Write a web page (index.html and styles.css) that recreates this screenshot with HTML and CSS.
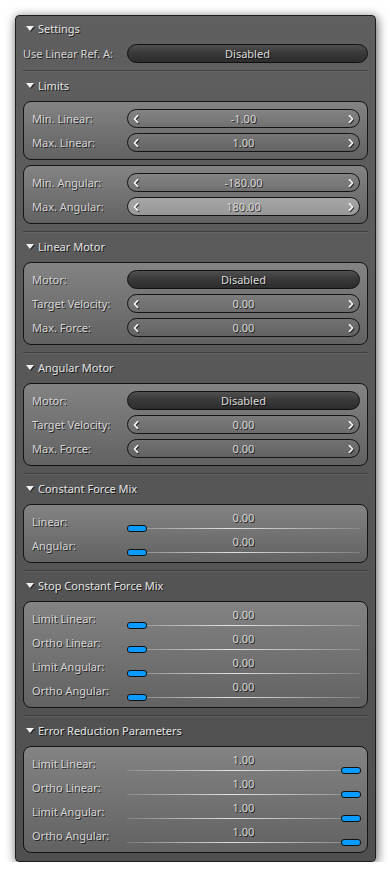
FILE: index.html
```html
<!DOCTYPE html>
<html>
<head>
<meta charset="utf-8">
<link rel="stylesheet" href="styles.css">
</head>
<body>
<div class="panel">
  <div class="hdr first"><span class="tri"></span>Settings</div>
  <div class="row"><span class="lbl">Use Linear Ref. A:</span><div class="btn wide">Disabled</div></div>
  <div class="sep"></div>

  <div class="hdr"><span class="tri"></span>Limits</div>
  <div class="group">
    <div class="row"><span class="lbl">Min. Linear:</span><div class="spin"><svg class="arr" viewBox="0 0 6 8" width="6" height="8"><path d="M4.6 0.6 L1.4 4 L4.6 7.4"/></svg><span class="sv">-1.00</span><svg class="arr" viewBox="0 0 6 8" width="6" height="8"><path d="M1.4 0.6 L4.6 4 L1.4 7.4"/></svg></div></div>
    <div class="row"><span class="lbl">Max. Linear:</span><div class="spin"><svg class="arr" viewBox="0 0 6 8" width="6" height="8"><path d="M4.6 0.6 L1.4 4 L4.6 7.4"/></svg><span class="sv">1.00</span><svg class="arr" viewBox="0 0 6 8" width="6" height="8"><path d="M1.4 0.6 L4.6 4 L1.4 7.4"/></svg></div></div>
  </div>
  <div class="group g2">
    <div class="row"><span class="lbl">Min. Angular:</span><div class="spin"><svg class="arr" viewBox="0 0 6 8" width="6" height="8"><path d="M4.6 0.6 L1.4 4 L4.6 7.4"/></svg><span class="sv">-180.00</span><svg class="arr" viewBox="0 0 6 8" width="6" height="8"><path d="M1.4 0.6 L4.6 4 L1.4 7.4"/></svg></div></div>
    <div class="row"><span class="lbl">Max. Angular:</span><div class="spin hover"><svg class="arr" viewBox="0 0 6 8" width="6" height="8"><path d="M4.6 0.6 L1.4 4 L4.6 7.4"/></svg><span class="sv">180.00</span><svg class="arr" viewBox="0 0 6 8" width="6" height="8"><path d="M1.4 0.6 L4.6 4 L1.4 7.4"/></svg></div></div>
  </div>
  <div class="sep"></div>

  <div class="hdr"><span class="tri"></span>Linear Motor</div>
  <div class="group">
    <div class="row"><span class="lbl">Motor:</span><div class="btn">Disabled</div></div>
    <div class="row"><span class="lbl">Target Velocity:</span><div class="spin"><svg class="arr" viewBox="0 0 6 8" width="6" height="8"><path d="M4.6 0.6 L1.4 4 L4.6 7.4"/></svg><span class="sv">0.00</span><svg class="arr" viewBox="0 0 6 8" width="6" height="8"><path d="M1.4 0.6 L4.6 4 L1.4 7.4"/></svg></div></div>
    <div class="row"><span class="lbl">Max. Force:</span><div class="spin"><svg class="arr" viewBox="0 0 6 8" width="6" height="8"><path d="M4.6 0.6 L1.4 4 L4.6 7.4"/></svg><span class="sv">0.00</span><svg class="arr" viewBox="0 0 6 8" width="6" height="8"><path d="M1.4 0.6 L4.6 4 L1.4 7.4"/></svg></div></div>
  </div>
  <div class="sep"></div>

  <div class="hdr"><span class="tri"></span>Angular Motor</div>
  <div class="group">
    <div class="row"><span class="lbl">Motor:</span><div class="btn">Disabled</div></div>
    <div class="row"><span class="lbl">Target Velocity:</span><div class="spin"><svg class="arr" viewBox="0 0 6 8" width="6" height="8"><path d="M4.6 0.6 L1.4 4 L4.6 7.4"/></svg><span class="sv">0.00</span><svg class="arr" viewBox="0 0 6 8" width="6" height="8"><path d="M1.4 0.6 L4.6 4 L1.4 7.4"/></svg></div></div>
    <div class="row"><span class="lbl">Max. Force:</span><div class="spin"><svg class="arr" viewBox="0 0 6 8" width="6" height="8"><path d="M4.6 0.6 L1.4 4 L4.6 7.4"/></svg><span class="sv">0.00</span><svg class="arr" viewBox="0 0 6 8" width="6" height="8"><path d="M1.4 0.6 L4.6 4 L1.4 7.4"/></svg></div></div>
  </div>
  <div class="sep"></div>

  <div class="hdr"><span class="tri"></span>Constant Force Mix</div>
  <div class="group">
    <div class="row"><span class="lbl">Linear:</span><div class="slider"><div class="val">0.00</div><div class="track"></div><span class="knob min"></span></div></div>
    <div class="row"><span class="lbl">Angular:</span><div class="slider"><div class="val">0.00</div><div class="track"></div><span class="knob min"></span></div></div>
  </div>
  <div class="sep"></div>

  <div class="hdr"><span class="tri"></span>Stop Constant Force Mix</div>
  <div class="group">
    <div class="row"><span class="lbl">Limit Linear:</span><div class="slider"><div class="val">0.00</div><div class="track"></div><span class="knob min"></span></div></div>
    <div class="row"><span class="lbl">Ortho Linear:</span><div class="slider"><div class="val">0.00</div><div class="track"></div><span class="knob min"></span></div></div>
    <div class="row"><span class="lbl">Limit Angular:</span><div class="slider"><div class="val">0.00</div><div class="track"></div><span class="knob min"></span></div></div>
    <div class="row"><span class="lbl">Ortho Angular:</span><div class="slider"><div class="val">0.00</div><div class="track"></div><span class="knob min"></span></div></div>
  </div>
  <div class="sep"></div>

  <div class="hdr"><span class="tri"></span>Error Reduction Parameters</div>
  <div class="group">
    <div class="row"><span class="lbl">Limit Linear:</span><div class="slider"><div class="val">1.00</div><div class="track"></div><span class="knob max"></span></div></div>
    <div class="row"><span class="lbl">Ortho Linear:</span><div class="slider"><div class="val">1.00</div><div class="track"></div><span class="knob max"></span></div></div>
    <div class="row"><span class="lbl">Limit Angular:</span><div class="slider"><div class="val">1.00</div><div class="track"></div><span class="knob max"></span></div></div>
    <div class="row"><span class="lbl">Ortho Angular:</span><div class="slider"><div class="val">1.00</div><div class="track"></div><span class="knob max"></span></div></div>
  </div>
</div>
</body>
</html>
```

FILE: styles.css
```css
html, body {
  margin: 0;
  padding: 0;
  background: #ffffff;
}
body {
  font-family: "Noto Sans", "DejaVu Sans", sans-serif;
  font-size: 11px;
  color: #d4d4d4;
}
.panel {
  box-sizing: border-box;
  margin: 15px 0 0 15px;
  width: 361px;
  height: 847px;
  padding: 0 7px 8px 7px;
  border: 1px solid #1c1c1c;
  border-radius: 4px;
  background: linear-gradient(#5f5f5f, #4f4f4f);
  box-shadow: 1px 2px 11px rgba(0, 0, 0, 0.65);
  display: flex;
  flex-direction: column;
}
.hdr {
  box-sizing: border-box;
  height: 30px;
  padding-bottom: 2px;
  display: flex;
  align-items: center;
  color: #e4e4e4;
  text-shadow: 1px 1px 0 rgba(0, 0, 0, 0.75);
  white-space: nowrap;
}
.hdr.first {
  height: 26px;
  margin-bottom: 2px;
}
.tri {
  width: 0;
  height: 0;
  margin: 1px 4px 0 3px;
  border-left: 4px solid transparent;
  border-right: 4px solid transparent;
  border-top: 5px solid #f4f4f4;
  filter: drop-shadow(1px 1px 0 rgba(0, 0, 0, 0.6));
}
.sep {
  height: 1px;
  margin-top: 7px;
  background: #3f3f3f;
  box-shadow: 0 1px 0 rgba(255, 255, 255, 0.06);
}
.group {
  border: 1px solid #141414;
  border-radius: 8px;
  padding: 7px 7px 7px 8px;
  background: linear-gradient(#838383, #626262);
  display: flex;
  flex-direction: column;
  gap: 5px;
}
.group.g2 {
  margin-top: 5px;
}
.row {
  height: 19px;
  display: flex;
  align-items: center;
}
.lbl {
  flex: 1;
  white-space: nowrap;
  padding-bottom: 1px;
  color: #d6d6d6;
  text-shadow: 1px 1px 0 rgba(0, 0, 0, 0.7);
}
.btn {
  box-sizing: border-box;
  width: 233px;
  height: 19px;
  padding-bottom: 1px;
  border: 1px solid #111;
  border-radius: 10px;
  background: linear-gradient(#505050, #3a3a3a 45%, #2c2c2c);
  display: flex;
  align-items: center;
  justify-content: center;
  color: #dcdcdc;
  text-shadow: 1px 1px 0 rgba(0, 0, 0, 0.8);
}
.btn.wide {
  width: 241px;
}
.spin {
  box-sizing: border-box;
  width: 233px;
  height: 19px;
  border: 1px solid #141414;
  border-radius: 10px;
  background: linear-gradient(rgba(255, 255, 255, 0.04), rgba(0, 0, 0, 0.03));
  display: flex;
  align-items: center;
  padding: 0 5px;
}
.spin.hover {
  background: linear-gradient(#a6a6a6, #979797);
}
.sv {
  flex: 1;
  text-align: center;
  padding-bottom: 1px;
  color: #d8d8d8;
  text-shadow: 1px 1px 0 rgba(0, 0, 0, 0.7);
}
.arr {
  display: block;
  flex: 0 0 6px;
  filter: drop-shadow(1px 1px 0 rgba(0, 0, 0, 0.6));
}
.arr path {
  fill: none;
  stroke: #f4f4f4;
  stroke-width: 1.6;
  stroke-linecap: round;
  stroke-linejoin: round;
}
.slider {
  position: relative;
  width: 233px;
  height: 19px;
}
.val {
  height: 13px;
  line-height: 12px;
  text-align: center;
  color: #d8d8d8;
  text-shadow: 1px 1px 0 rgba(0, 0, 0, 0.75);
}
.track {
  margin-top: 3px;
  height: 1px;
  background: linear-gradient(to right, rgba(255, 255, 255, 0.15), rgba(255, 255, 255, 0.8) 45%, rgba(255, 255, 255, 0.15));
}
.knob {
  position: absolute;
  top: 13px;
  width: 20px;
  height: 7px;
  box-sizing: border-box;
  border: 1px solid #111;
  border-radius: 3px;
  background: #0a9bff;
}
.knob.min {
  left: 0;
}
.knob.max {
  right: -1px;
}
```
